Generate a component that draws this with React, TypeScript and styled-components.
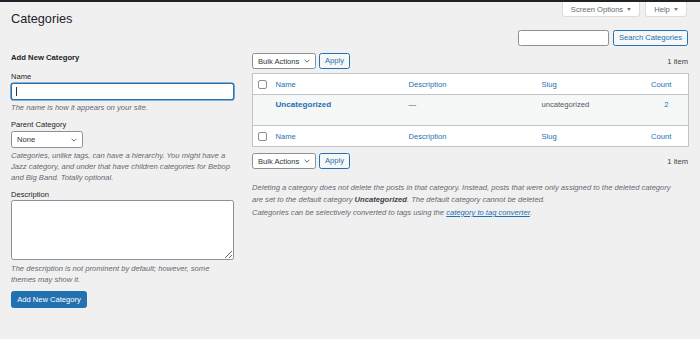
import React from "react";
import styled, { createGlobalStyle } from "styled-components";

const Global = createGlobalStyle`
  html, body { margin: 0; padding: 0; background: #f0f0f1; }
  body {
    font-family: "Liberation Sans", Arial, Helvetica, sans-serif;
    color: #3c434a;
    font-size: 7.6px;
  }
  * { box-sizing: border-box; }
`;

const TopBar = styled.div`
  height: 2px;
  background: #1d2327;
`;

const Wrap = styled.div`
  padding: 0 12px 0 11px;
`;

const HeaderRow = styled.div`
  display: flex;
  justify-content: space-between;
  align-items: flex-start;
`;

const Title = styled.h1`
  margin: 10px 0 0 0;
  font-size: 12.7px;
  line-height: 15px;
  font-weight: 400;
  color: #1d2327;
`;

const MetaLinks = styled.div`
  display: flex;
  gap: 5px;
  padding-right: 1px;
`;

const MetaButton = styled.button<{ $w: number }>`
  width: ${(p) => p.$w}px;
  height: 15px;
  display: flex;
  align-items: center;
  justify-content: center;
  gap: 4px;
  background: #fff;
  border: 1px solid #dcdcde;
  border-top: none;
  border-radius: 0 0 3px 3px;
  color: #646970;
  font-family: inherit;
  font-size: 7.6px;
  padding: 0;
  &::after {
    content: "";
    border-left: 2.5px solid transparent;
    border-right: 2.5px solid transparent;
    border-top: 3.5px solid #787c82;
  }
`;

const SearchRow = styled.div`
  display: flex;
  justify-content: flex-end;
  gap: 4px;
  margin-top: 3px;
`;

const SearchInput = styled.input`
  width: 91px;
  height: 16px;
  border: 1px solid #8c8f94;
  border-radius: 2.5px;
  background: #fff;
  padding: 0 4px;
  font-size: 7.6px;
  outline: none;
`;

const SecondaryButton = styled.button<{ $w?: number }>`
  height: 16px;
  ${(p) => (p.$w ? `width: ${p.$w}px;` : "")}
  padding: 0;
  border: 1px solid #2271b1;
  border-radius: 2.5px;
  background: #f6f7f7;
  color: #2271b1;
  font-family: inherit;
  font-size: 7.6px;
  line-height: 14px;
  white-space: nowrap;
`;

const Columns = styled.div`
  display: grid;
  grid-template-columns: 223px 436px;
  column-gap: 18px;
  margin-top: 6px;
`;

const LeftCol = styled.div`
  display: flex;
  flex-direction: column;
`;

const FormTitle = styled.h2`
  margin: 0;
  height: 12px;
  line-height: 12px;
  font-size: 7.7px;
  font-weight: 700;
  color: #1d2327;
`;

const Label = styled.label<{ $mt: number }>`
  display: block;
  margin-top: ${(p) => p.$mt}px;
  line-height: 10px;
  height: 10px;
  color: #1d2327;
`;

const InputWrap = styled.div`
  position: relative;
  margin-top: 1px;
`;

const TextInput = styled.input<{ $focused?: boolean }>`
  display: block;
  width: 223px;
  height: 17px;
  border: 1px solid ${(p) => (p.$focused ? "#2271b1" : "#8c8f94")};
  box-shadow: ${(p) => (p.$focused ? "0 0 0 0.6px #2271b1" : "none")};
  border-radius: 2.5px;
  background: #fff;
  outline: none;
  padding: 0 5px;
  font-size: 7.6px;
  caret-color: transparent;
`;

const Caret = styled.span`
  position: absolute;
  left: 5px;
  top: 4px;
  width: 1px;
  height: 9px;
  background: #2c3338;
`;

const Help = styled.p<{ $mt: number }>`
  margin: ${(p) => p.$mt}px 0 0;
  font-style: italic;
  color: #646970;
  line-height: 11px;
  white-space: nowrap;
`;

const SelectBox = styled.div<{ $w: number; $h: number }>`
  width: ${(p) => p.$w}px;
  height: ${(p) => p.$h}px;
  display: flex;
  align-items: center;
  justify-content: space-between;
  padding: 0 5px 0 5px;
  border: 1px solid #8c8f94;
  border-radius: 2.5px;
  background: #fff;
  color: #2c3338;
  font-size: 7.6px;
  flex-shrink: 0;
`;

const SelectWrap = styled.div`
  margin-top: 1px;
`;

const TextArea = styled.textarea`
  display: block;
  width: 223px;
  height: 60px;
  border: 1px solid #8c8f94;
  border-radius: 2.5px;
  background: #fff;
  outline: none;
  font-size: 7.6px;
`;

const PrimaryButton = styled.button`
  margin-top: 6px;
  width: 76px;
  height: 17px;
  border: 1px solid #2271b1;
  border-radius: 2.5px;
  background: #2271b1;
  color: #fff;
  font-family: inherit;
  font-size: 7.6px;
  padding: 0;
`;

const RightCol = styled.div`
  display: flex;
  flex-direction: column;
`;

const NavRow = styled.div<{ $mt: number }>`
  display: flex;
  align-items: center;
  gap: 3px;
  margin-top: ${(p) => p.$mt}px;
  height: 16px;
`;

const ItemCount = styled.span`
  margin-left: auto;
  color: #3c434a;
`;

const Table = styled.table`
  margin-top: 4px;
  width: 436px;
  border-collapse: collapse;
  table-layout: fixed;
  background: #fff;
  border: 1px solid #c3c4c7;
`;

const Th = styled.th<{ $center?: boolean; $foot?: boolean }>`
  height: 21px;
  padding: 0 4px;
  text-align: ${(p) => (p.$center ? "center" : "left")};
  font-weight: 400;
  color: #2271b1;
  vertical-align: middle;
  border-bottom: ${(p) => (p.$foot ? "none" : "1px solid #c3c4c7")};
  border-top: ${(p) => (p.$foot ? "1px solid #c3c4c7" : "none")};
`;

const CheckTh = styled(Th)`
  padding: 0 0 0 5px;
`;

const Td = styled.td<{ $center?: boolean }>`
  height: 31px;
  vertical-align: top;
  padding: 4px 4px 0 ${(p) => (p.$center ? 14 : 4)}px;
  text-align: ${(p) => (p.$center ? "center" : "left")};
  background: #f6f7f7;
  color: #50575e;
  line-height: 11px;
`;

const Checkbox = styled.span`
  display: block;
  width: 9px;
  height: 9px;
  border: 1px solid #8c8f94;
  border-radius: 2px;
  background: #fff;
`;

const RowTitle = styled.a`
  color: #2271b1;
  font-weight: 700;
  font-size: 8.1px;
  text-decoration: none;
`;

const CountLink = styled.a`
  color: #2271b1;
  text-decoration: none;
`;

const Notes = styled.div`
  margin-top: 13px;
  font-style: italic;
  color: #646970;
  line-height: 12px;
  white-space: nowrap;
`;

const Note = styled.p<{ $mt?: number }>`
  margin: ${(p) => p.$mt ?? 0}px 0 0;
  strong {
    color: #3c434a;
    font-weight: 700;
  }
  a {
    color: #2271b1;
    text-decoration: underline;
  }
`;

const Chevron = () => (
  <svg width="6" height="4" viewBox="0 0 6 4" aria-hidden>
    <polyline points="0.6,0.8 3,3.2 5.4,0.8" fill="none" stroke="#50575e" strokeWidth="0.9" />
  </svg>
);

const BulkNav = ({ mt }: { mt: number }) => (
  <NavRow $mt={mt}>
    <SelectBox $w={64} $h={16}>
      <span>Bulk Actions</span>
      <Chevron />
    </SelectBox>
    <SecondaryButton $w={31}>Apply</SecondaryButton>
    <ItemCount>1 item</ItemCount>
  </NavRow>
);

export default function App() {
  return (
    <>
      <Global />
      <TopBar />
      <Wrap>
        <HeaderRow>
          <Title>Categories</Title>
          <MetaLinks>
            <MetaButton $w={78}>Screen Options</MetaButton>
            <MetaButton $w={42}>Help</MetaButton>
          </MetaLinks>
        </HeaderRow>
        <SearchRow>
          <SearchInput type="search" />
          <SecondaryButton $w={75}>Search Categories</SecondaryButton>
        </SearchRow>
        <Columns>
          <LeftCol>
            <FormTitle>Add New Category</FormTitle>
            <Label $mt={8}>Name</Label>
            <InputWrap>
              <TextInput $focused type="text" />
              <Caret />
            </InputWrap>
            <Help $mt={2}>The name is how it appears on your site.</Help>
            <Label $mt={7}>Parent Category</Label>
            <SelectWrap>
              <SelectBox $w={72} $h={17}>
                <span>None</span>
                <Chevron />
              </SelectBox>
            </SelectWrap>
            <Help $mt={2}>
              Categories, unlike tags, can have a hierarchy. You might have a
              <br />
              Jazz category, and under that have children categories for Bebop
              <br />
              and Big Band. Totally optional.
            </Help>
            <Label $mt={7}>Description</Label>
            <TextArea />
            <Help $mt={3}>
              The description is not prominent by default; however, some
              <br />
              themes may show it.
            </Help>
            <PrimaryButton>Add New Category</PrimaryButton>
          </LeftCol>
          <RightCol>
            <BulkNav mt={1} />
            <Table>
              <colgroup>
                <col style={{ width: 19 }} />
                <col style={{ width: 133 }} />
                <col style={{ width: 133 }} />
                <col style={{ width: 97 }} />
                <col style={{ width: 54 }} />
              </colgroup>
              <thead>
                <tr>
                  <CheckTh><Checkbox /></CheckTh>
                  <Th>Name</Th>
                  <Th>Description</Th>
                  <Th>Slug</Th>
                  <Th $center>Count</Th>
                </tr>
              </thead>
              <tbody>
                <tr>
                  <Td />
                  <Td><RowTitle href="#">Uncategorized</RowTitle></Td>
                  <Td>—</Td>
                  <Td>uncategorized</Td>
                  <Td $center><CountLink href="#">2</CountLink></Td>
                </tr>
              </tbody>
              <tfoot>
                <tr>
                  <CheckTh $foot><Checkbox /></CheckTh>
                  <Th $foot>Name</Th>
                  <Th $foot>Description</Th>
                  <Th $foot>Slug</Th>
                  <Th $foot $center>Count</Th>
                </tr>
              </tfoot>
            </Table>
            <BulkNav mt={6} />
            <Notes>
              <Note>
                Deleting a category does not delete the posts in that category. Instead, posts that were only assigned to the deleted category
                <br />
                are set to the default category <strong>Uncategorized</strong>. The default category cannot be deleted.
              </Note>
              <Note $mt={1}>
                Categories can be selectively converted to tags using the <a href="#">category to tag converter</a>.
              </Note>
            </Notes>
          </RightCol>
        </Columns>
      </Wrap>
    </>
  );
}
